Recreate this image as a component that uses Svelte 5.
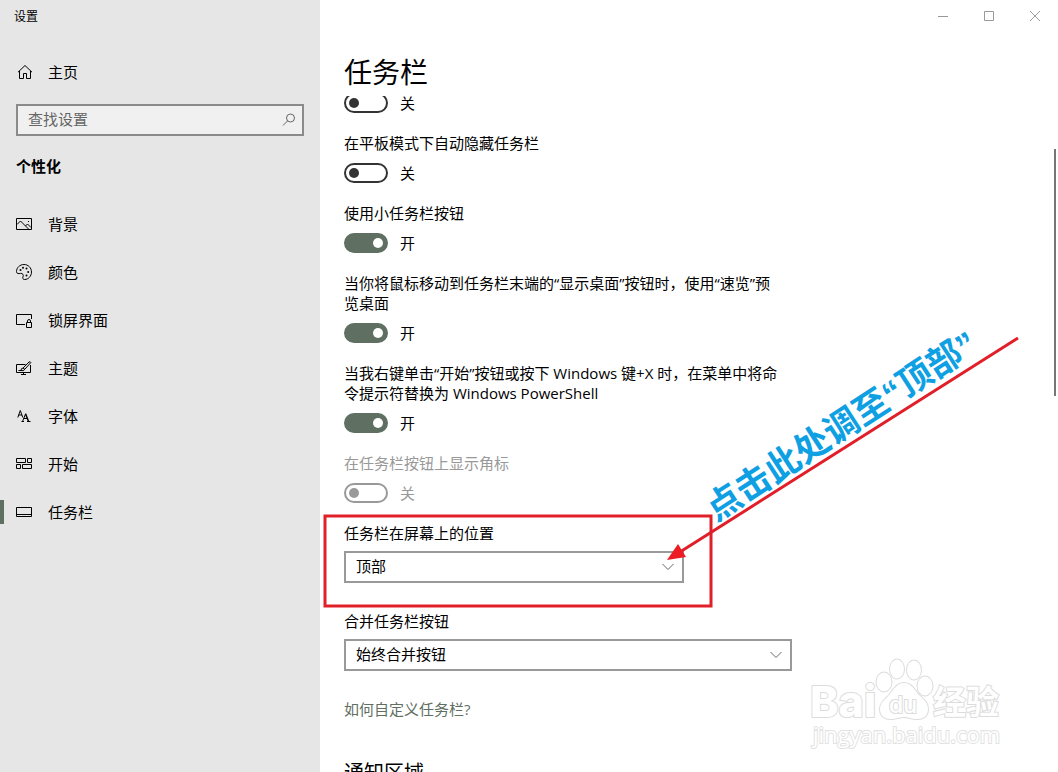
<script>
  const navItems = [
    { id: 'background', label: '背景' },
    { id: 'colors', label: '颜色' },
    { id: 'lock', label: '锁屏界面' },
    { id: 'themes', label: '主题' },
    { id: 'fonts', label: '字体' },
    { id: 'start', label: '开始' },
    { id: 'taskbar', label: '任务栏' }
  ];

  let active = $state('taskbar');
  let search = $state('');
  let position = $state('顶部');
  let combine = $state('始终合并按钮');

  let toggles = $state([
    { id: 'hide-desktop', label: '', on: false },
    { id: 'hide-tablet', label: '在平板模式下自动隐藏任务栏', on: false },
    { id: 'small-buttons', label: '使用小任务栏按钮', on: true },
    { id: 'peek', label: '当你将鼠标移动到任务栏末端的“显示桌面”按钮时，使用“速览”预览桌面', on: true },
    { id: 'powershell', label: '当我右键单击“开始”按钮或按下 Windows 键+X 时，在菜单中将命令提示符替换为 Windows PowerShell', on: true },
    { id: 'badges', label: '在任务栏按钮上显示角标', on: false, disabled: true }
  ]);
</script>

{#snippet chevron()}
  <svg class="chevron" width="12" height="8" viewBox="0 0 12 8" fill="none" stroke="#666">
    <path d="M0.5 1L6 6.5L11.5 1" />
  </svg>
{/snippet}

<div class="window">
  <aside class="sidebar">
    <div class="app-title">设置</div>

    <button type="button" class="nav-item home">
      <svg width="16" height="16" viewBox="0 0 16 16" fill="none" stroke="currentColor">
        <path d="M2 8.2L9 1.5L16 8.2M3.5 7V14.5H7.5V9.5H10.5V14.5H14.5V7" />
      </svg>
      <span>主页</span>
    </button>

    <div class="search">
      <input type="text" aria-label="查找设置" placeholder="查找设置" bind:value={search} />
      <svg width="14" height="14" viewBox="0 0 14 14" fill="none" stroke="#666">
        <circle cx="8.5" cy="5" r="4" />
        <path d="M5.6 7.9L1 12.5" />
      </svg>
    </div>

    <h2>个性化</h2>

    <nav>
      {#each navItems as item (item.id)}
        <button
          type="button"
          class="nav-item"
          class:active={active === item.id}
          onclick={() => (active = item.id)}
        >
          <svg width="16" height="16" viewBox="0 0 16 16" fill="none" stroke="currentColor">
            {#if item.id === 'background'}
              <path d="M0.5 2.5H15.5V13.5H0.5Z" />
              <path d="M1 8.5L4.5 5L12.5 13M9.5 10L11.5 8L15 11.5" />
              <path d="M12 5.5H13" />
            {:else if item.id === 'colors'}
              <path d="M8 0.5C12.2 0.5 15.5 3.8 15.5 8C15.5 12.2 12.3 15.5 8.7 15.5C6.8 15.5 6.4 14.3 7 12.8C7.8 10.8 6.6 9 4.6 9.4C2.6 9.8 0.5 9.8 0.5 7.6C0.5 3.7 3.8 0.5 8 0.5Z" />
              <g fill="currentColor" stroke="none">
                <circle cx="4.5" cy="6" r="1" />
                <circle cx="7" cy="3.8" r="1" />
                <circle cx="10.5" cy="4.5" r="1" />
                <circle cx="12.2" cy="8" r="1" />
                <circle cx="10.5" cy="11.5" r="1" />
              </g>
            {:else if item.id === 'lock'}
              <path d="M9 12.5H0.5V2.5H15.5V7" />
              <path d="M10.5 10.5H15.5V15.5H10.5ZM11.5 10.5V9Q11.5 7.5 13 7.5Q14.5 7.5 14.5 9V10.5" />
            {:else if item.id === 'themes'}
              <path d="M9.5 4.5H0.5V12.5H14.5V5M7.5 12.5V15M5 14.5H10M2.5 10.5H6" />
              <path d="M6.8 8.3L13 2Q14.4 1.2 14.8 2.6L8.8 9.3M5 10.5Q5 8 6.8 8.2Q9 8.4 8.5 9.8Q7.5 11.3 5 10.5Z" />
            {:else if item.id === 'fonts'}
              <path d="M1.8 9.5L4.3 2.5L6.8 9.5M2.6 7H6" />
              <path d="M5.5 13.5H8M11 13.5H14.5M6.5 13.5L9.7 5.5M7.8 10.5H11" />
              <path d="M9.6 6L12.6 13.5" stroke-width="1.5" />
            {:else if item.id === 'start'}
              <path d="M0.5 2.5H9.5V6.5H0.5ZM11.5 2.5H15.5V6.5H11.5ZM0.5 8.5H4.5V12.5H0.5ZM6.5 8.5H15.5V12.5H6.5Z" />
            {:else}
              <path d="M0.5 3.5H15.5V12.5H0.5ZM0.5 10.5H15.5" />
            {/if}
          </svg>
          <span>{item.label}</span>
        </button>
      {/each}
    </nav>
  </aside>

  <main>
    <div class="caption">
      <button type="button" aria-label="最小化">
        <svg width="10" height="10" viewBox="0 0 10 10"><path d="M0 5.5H10" /></svg>
      </button>
      <button type="button" aria-label="最大化">
        <svg width="10" height="10" viewBox="0 0 10 10"><path d="M0.5 0.5H9.5V9.5H0.5Z" /></svg>
      </button>
      <button type="button" aria-label="关闭">
        <svg width="10" height="10" viewBox="0 0 10 10"><path d="M0 0L10 10M10 0L0 10" /></svg>
      </button>
    </div>

    <h1>任务栏</h1>

    <div class="scroll">
      <div class="content">
        {#each toggles as toggle (toggle.id)}
          <div class="setting" class:disabled={toggle.disabled}>
            {#if toggle.label}
              <label for={toggle.id}>{toggle.label}</label>
            {/if}
            <div class="toggle-row">
              <input
                type="checkbox"
                id={toggle.id}
                aria-label={toggle.label || '自动隐藏任务栏'}
                bind:checked={toggle.on}
                disabled={toggle.disabled}
              />
              <span>{toggle.on ? '开' : '关'}</span>
            </div>
          </div>
        {/each}

        <div class="field">
          <label for="position">任务栏在屏幕上的位置</label>
          <div class="select short">
            <select id="position" bind:value={position}>
              <option>靠左</option>
              <option>顶部</option>
              <option>靠右</option>
              <option>底部</option>
            </select>
            {@render chevron()}
          </div>
        </div>

        <div class="field">
          <label for="combine">合并任务栏按钮</label>
          <div class="select">
            <select id="combine" bind:value={combine}>
              <option>始终合并按钮</option>
              <option>任务栏已满时</option>
              <option>从不</option>
            </select>
            {@render chevron()}
          </div>
        </div>

        <a href="#help">如何自定义任务栏?</a>

        <h3>通知区域</h3>
      </div>
    </div>
    <div class="scroll-thumb"></div>
  </main>

  <!-- markup drawn over the window -->
  <svg class="overlay" width="1058" height="772" viewBox="0 0 1058 772">
    <g class="watermark">
      <text x="810" y="717" font-size="43" font-weight="800">Bai</text>
      <ellipse cx="884" cy="682" rx="7.5" ry="9.5" />
      <ellipse cx="897" cy="669" rx="7" ry="9.5" />
      <ellipse cx="914" cy="670" rx="7" ry="9.5" />
      <ellipse cx="925" cy="686" rx="7.5" ry="9.5" />
      <path d="M904 683C911 683 914 689 918 694C923 699 928 702 928 709C928 716 923 719 917 719C911 719 908 717 904 717C899 717 896 719 891 719C885 719 880 716 880 709C880 702 886 699 890 694C894 689 897 683 904 683Z" />
      <text x="889" y="713" font-size="23" font-weight="500">du</text>
      <text class="cjk" x="933" y="714" font-size="33" font-weight="700">经验</text>
      <text class="domain" x="813" y="743" font-size="22">jingyan.baidu.com</text>
    </g>
    <rect x="325" y="516" width="386" height="90" fill="none" stroke="#e01f29" stroke-width="3" />
    <text class="note" transform="translate(716 522) rotate(-33)">点击此处调至“顶部”</text>
    <path d="M1018 338L680 552" stroke="#e01f29" stroke-width="3" />
    <path d="M667 560L678 544L686 557Z" fill="#ed1c24" />
  </svg>
</div>

<style>
  :global(body) {
    margin: 0;
  }

  .window {
    position: relative;
    display: flex;
    height: 100vh;
    overflow: hidden;
    background: #fff;
    color: #000;
    font-family: 'Open Sans', 'Noto Sans CJK SC', sans-serif;
    font-size: 15px;
    line-height: 20px;
  }

  button,
  input,
  select {
    font: inherit;
    color: inherit;
    box-sizing: border-box;
  }

  button {
    border: none;
    background: none;
    padding: 0;
  }

  .sidebar {
    width: 320px;
    flex-shrink: 0;
    background: #e6e6e6;
  }

  .app-title {
    height: 32px;
    padding-left: 14px;
    font-size: 12px;
    line-height: 34px;
    margin-bottom: 16px;
  }

  .nav-item {
    display: flex;
    align-items: center;
    gap: 16px;
    width: 100%;
    height: 48px;
    padding-left: 16px;
    text-align: left;
  }

  .nav-item svg {
    overflow: visible;
  }

  .nav-item.active {
    padding-left: 12px;
  }

  .nav-item.active::before {
    content: '';
    width: 4px;
    height: 24px;
    margin-left: -12px;
    margin-right: -4px;
    background: #5f6f62;
  }

  .search {
    display: flex;
    align-items: center;
    height: 32px;
    margin: 8px 16px 20px;
    padding: 0 6px 0 10px;
    border: 2px solid #8a8a8a;
    background: #f0f0f0;
    box-sizing: border-box;
  }

  .search input {
    flex: 1;
    min-width: 0;
    padding: 0 0 2px;
    border: none;
    outline: none;
    background: none;
  }

  .search input::placeholder {
    color: #666;
    opacity: 1;
  }

  h2 {
    margin: 0 16px 24px;
    font-size: 15px;
    font-weight: 700;
  }

  main {
    position: relative;
    display: flex;
    flex-direction: column;
    flex: 1;
    min-width: 0;
  }

  .caption {
    display: flex;
    justify-content: flex-end;
    height: 32px;
  }

  .caption button {
    display: flex;
    align-items: center;
    justify-content: center;
    width: 46px;
  }

  .caption svg {
    fill: none;
    stroke: #999;
  }

  h1 {
    margin: 20px 24px 4px;
    font-size: 28px;
    font-weight: 400;
    line-height: 40px;
  }

  .scroll {
    flex: 1;
    min-height: 0;
    overflow: hidden;
  }

  .content {
    max-width: 448px;
    margin: -3px 24px 0;
  }

  .setting {
    display: flex;
    flex-direction: column;
    gap: 10px;
    margin-bottom: 20px;
  }

  .setting label {
    max-width: 436px;
  }

  .setting.disabled {
    color: #999;
  }

  .toggle-row {
    display: flex;
    align-items: center;
    gap: 12px;
    height: 20px;
  }

  .toggle-row input {
    appearance: none;
    display: flex;
    align-items: center;
    width: 44px;
    height: 20px;
    margin: 0;
    padding: 0 3px;
    border: 2px solid #333;
    border-radius: 10px;
  }

  .toggle-row input::before {
    content: '';
    width: 10px;
    height: 10px;
    border-radius: 50%;
    background: #333;
  }

  .toggle-row input:checked {
    justify-content: flex-end;
    border-color: #5f6f62;
    background: #5f6f62;
  }

  .toggle-row input:checked::before {
    background: #fff;
  }

  .toggle-row input:disabled {
    border-color: #999;
  }

  .toggle-row input:disabled::before {
    background: #999;
  }

  .field {
    display: flex;
    flex-direction: column;
    gap: 8px;
    margin-bottom: 28px;
  }

  .select {
    display: grid;
    align-items: center;
  }

  .select.short {
    max-width: 340px;
  }

  .select select {
    grid-area: 1 / 1;
    appearance: none;
    width: 100%;
    height: 32px;
    padding: 0 32px 2px 10px;
    border: 2px solid #999;
    border-radius: 0;
    background: #fff;
  }

  .chevron {
    grid-area: 1 / 1;
    justify-self: end;
    margin-right: 10px;
    pointer-events: none;
  }

  a {
    color: #5f6f62;
    text-decoration: none;
  }

  h3 {
    margin: 40px 0 0;
    font-size: 20px;
    font-weight: 400;
    line-height: 28px;
  }

  .scroll-thumb {
    position: absolute;
    top: 149px;
    right: 2px;
    width: 2px;
    height: 247px;
    background: #767676;
  }

  .overlay {
    position: absolute;
    top: 0;
    left: 0;
    pointer-events: none;
  }

  .note {
    fill: #0f9fe3;
    font-family: 'Liberation Sans', 'Noto Sans CJK SC', sans-serif;
    font-size: 35px;
    font-weight: 700;
  }

  .watermark {
    fill: #fff;
    stroke: #dcdcdc;
    stroke-width: 2;
    paint-order: stroke;
    font-family: Inter, sans-serif;
  }

  .watermark .cjk {
    font-family: 'Noto Sans CJK SC', sans-serif;
  }

  .watermark .domain {
    font-family: 'Open Sans', sans-serif;
    stroke: #e2e2e2;
  }
</style>
